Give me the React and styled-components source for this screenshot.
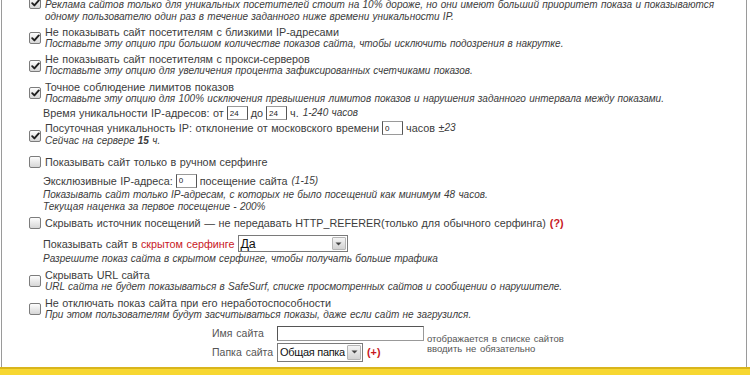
import React from "react";
import styled, { createGlobalStyle } from "styled-components";

const Global = createGlobalStyle`
  html, body { margin: 0; padding: 0; background: #fff; }
  body {
    font-family: "Liberation Sans", Arial, sans-serif;
    font-size: 10.8px;
    color: #3c3c3c;
    overflow: hidden;
  }
`;

const Page = styled.div`
  width: 750px;
  height: 375px;
  display: flex;
  flex-direction: column;
  overflow: hidden;
`;

const Panel = styled.div`
  flex: 1;
  margin: 0 3px 0 1px;
  border-left: 1px solid #9a9a9a;
  border-right: 1px solid #9a9a9a;
  padding-left: 27px;
  display: flex;
  flex-direction: column;
  overflow: hidden;
`;

const Footer = styled.div`
  height: 6px;
  border-top: 2px solid #d9b51c;
  background: #f7d731;
`;

const Option = styled.div`
  display: grid;
  grid-template-columns: 16px 1fr;
  align-items: center;
  margin-top: ${(p) => p.$mt || 0}px;
`;

const Box = styled.span`
  width: 10px;
  height: 10px;
  border: 1px solid #7c7c7c;
  border-radius: 2px;
  background: linear-gradient(#fdfdfd, #d6d6d6);
  display: flex;
  align-items: center;
  justify-content: center;
  margin-top: ${(p) => p.$dy || 0}px;
`;

const Body = styled.div`
  display: flex;
  flex-direction: column;
`;

const Line = styled.div`
  line-height: ${(p) => p.$lh || 12}px;
  height: ${(p) => p.$lh || 12}px;
  white-space: nowrap;
  display: flex;
  align-items: center;
  word-spacing: 0.5px;
  font-style: ${(p) => (p.$italic ? "italic" : "normal")};
  font-size: ${(p) => (p.$italic ? "10px" : "inherit")};
`;

const Sub = styled.div`
  display: flex;
  flex-direction: column;
  padding-left: 14px;
  margin-top: ${(p) => p.$mt || 0}px;
`;

const Em = styled.i`
  font-size: 10px;
  margin-left: ${(p) => p.$ml || 0}px;
`;

const Red = styled.span`
  color: #c8181e;
  font-weight: ${(p) => (p.$bold ? "bold" : "normal")};
  margin-left: ${(p) => p.$ml || 0}px;
`;

const Field = styled.input`
  box-sizing: border-box;
  width: 21px;
  height: 14px;
  margin: 0 3px;
  padding: 0 2px;
  font-family: "Liberation Sans", Arial, sans-serif;
  font-size: 8px;
  color: #222;
  border: 1px solid #9a9a9a;
  border-left-color: #555;
  border-right-color: #555;
  background: #fff;
  outline: none;
`;

const SelectBox = styled.div`
  box-sizing: border-box;
  width: ${(p) => p.$w}px;
  height: ${(p) => p.$h}px;
  border: 1px solid #7a7a7a;
  background: #fff;
  display: flex;
  align-items: stretch;
  margin-left: ${(p) => p.$ml || 0}px;
`;

const SelectText = styled.span`
  flex: 1;
  min-width: 0;
  overflow: hidden;
  white-space: nowrap;
  font-family: "Liberation Sans", Arial, sans-serif;
  font-size: ${(p) => p.$fs || 12}px;
  letter-spacing: -0.3px;
  font-style: normal;
  color: #111;
  padding-left: 2px;
  display: flex;
  align-items: center;
  word-spacing: 0;
`;

const SelectArrow = styled.span`
  width: 12px;
  flex: none;
  margin: 1px;
  border: 1px solid #b5b5b5;
  border-radius: 1px;
  background: linear-gradient(#f4f4f4, #d2d2d2);
  display: flex;
  align-items: center;
  justify-content: center;
`;

const FormGrid = styled.div`
  display: grid;
  grid-template-columns: 65px 147px auto;
  grid-template-rows: 17px 21px;
  align-items: center;
  margin-left: 183px;
  margin-top: ${(p) => p.$mt || 0}px;
  word-spacing: 1px;
`;

const Label = styled.span`
  color: #555;
  font-size: 10.5px;
  white-space: nowrap;
`;

const TextField = styled.input`
  box-sizing: border-box;
  width: 147px;
  height: 15px;
  margin: 0;
  border: 1px solid #555;
  border-right-color: #999;
  border-bottom-color: #999;
  outline: none;
`;

const Note = styled.div`
  grid-column: 3;
  grid-row: 1 / span 2;
  align-self: center;
  font-size: 9.5px;
  line-height: 10px;
  color: #555;
  padding-left: 3px;
  white-space: nowrap;
`;

const Tick = () => (
  <svg width="9" height="8" viewBox="0 0 9 8">
    <path d="M1.2 4.2 L3.4 6.4 L7.8 1.4" fill="none" stroke="#1e1e1e" strokeWidth="1.9" strokeLinecap="round" strokeLinejoin="round" />
  </svg>
);

const Check = ({ on, dy }) => <Box $dy={dy}>{on ? <Tick /> : null}</Box>;

const Arrow = () => (
  <svg width="7" height="4" viewBox="0 0 7 4">
    <path d="M0.5 0.5 L6.5 0.5 L3.5 3.5 Z" fill="#444" />
  </svg>
);

const Select = ({ value, w, h, ml, fs }) => (
  <SelectBox $w={w} $h={h} $ml={ml}>
    <SelectText $fs={fs}>{value}</SelectText>
    <SelectArrow>
      <Arrow />
    </SelectArrow>
  </SelectBox>
);

export default function App() {
  return (
    <Page>
      <Global />
      <Panel>
        <Option $mt={-1}>
          <Check on dy={-17} />
          <Body>
            <Line $italic>
              Реклама сайтов только для уникальных посетителей стоит на 10% дороже, но они имеют больший приоритет показа и показываются
            </Line>
            <Line $italic>одному пользователю один раз в течение заданного ниже времени уникальности IP.</Line>
          </Body>
        </Option>

        <Option $mt={2.5}>
          <Check on dy={1} />
          <Body>
            <Line>Не показывать сайт посетителям с близкими IP-адресами</Line>
            <Line $italic>Поставьте эту опцию при большом количестве показов сайта, чтобы исключить подозрения в накрутке.</Line>
          </Body>
        </Option>

        <Option $mt={3.5}>
          <Check on dy={1} />
          <Body>
            <Line>Не показывать сайт посетителям с прокси-серверов</Line>
            <Line $italic>Поставьте эту опцию для увеличения процента зафиксированных счетчиками показов.</Line>
          </Body>
        </Option>

        <Option $mt={3.5}>
          <Check on dy={1} />
          <Body>
            <Line>Точное соблюдение лимитов показов</Line>
            <Line $italic>Поставьте эту опцию для 100% исключения превышения лимитов показов и нарушения заданного интервала между показами.</Line>
          </Body>
        </Option>

        <Sub $mt={0.5}>
          <Line $lh={16}>
            Время уникальности IP-адресов: от
            <Field readOnly value="24" />
            до
            <Field readOnly value="24" />
            ч. <Em $ml={4}>1-240 часов</Em>
          </Line>
        </Sub>

        <Option $mt={0}>
          <Check on dy={4} />
          <Body>
            <Line $lh={14}>
              Посуточная уникальность IP: отклонение от московского времени
              <Field readOnly value="0" />
              часов ±<Em>23</Em>
            </Line>
            <Line $italic>
              Сейчас на сервере&nbsp;<b>15</b>&nbsp;ч.
            </Line>
          </Body>
        </Option>

        <Option $mt={7.5}>
          <Check />
          <Body>
            <Line $lh={14}>Показывать сайт только в ручном серфинге</Line>
          </Body>
        </Option>

        <Sub $mt={4}>
          <Line $lh={16}>
            Эксклюзивные IP-адреса:
            <Field readOnly value="0" />
            посещение сайта <Em $ml={4}>(1-15)</Em>
          </Line>
          <Line $italic>Показывать сайт только IP-адресам, с которых не было посещений как минимум 48 часов.</Line>
          <Line $italic>Текущая наценка за первое посещение - 200%</Line>
        </Sub>

        <Option $mt={3}>
          <Check />
          <Body>
            <Line $lh={14}>
              Скрывать источник посещений — не передавать HTTP_REFERER(только для обычного серфинга)
              <Red $bold $ml={4}>(?)</Red>
            </Line>
          </Body>
        </Option>

        <Sub $mt={5}>
          <Line $lh={18}>
            Показывать сайт в&nbsp;<Red>скрытом серфинге</Red>
            <Select value="Да" w={110} h={17} ml={3} fs={12.5} />
          </Line>
          <Line $italic>Разрешите показ сайта в скрытом серфинге, чтобы получать больше трафика</Line>
        </Sub>

        <Option $mt={4}>
          <Check dy={1} />
          <Body>
            <Line>Скрывать URL сайта</Line>
            <Line $italic>URL сайта не будет показываться в SafeSurf, списке просмотренных сайтов и сообщении о нарушителе.</Line>
          </Body>
        </Option>

        <Option $mt={4}>
          <Check dy={1} />
          <Body>
            <Line>Не отключать показ сайта при его неработоспособности</Line>
            <Line $italic>При этом пользователям будут засчитываться показы, даже если сайт не загрузился.</Line>
          </Body>
        </Option>

        <FormGrid $mt={4}>
          <Label>Имя сайта</Label>
          <TextField readOnly value="" />
          <Note>
            отображается в списке сайтов
            <br />
            вводить не обязательно
          </Note>
          <Label>Папка сайта</Label>
          <Line $lh={21}>
            <Select value="Общая папка" w={86} h={19} fs={11} />
            <Red $bold $ml={4}>(+)</Red>
          </Line>
        </FormGrid>
      </Panel>
      <Footer />
    </Page>
  );
}
